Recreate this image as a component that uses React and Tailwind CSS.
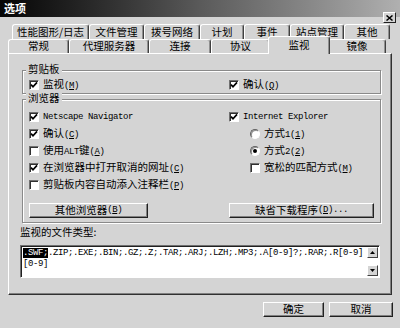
import clsx from "clsx";

// ASCII parts use a narrow fixed-width face, like the half-width glyphs of the original
const A = ({ children }) => (
  <span className="font-['Liberation_Mono',monospace] text-[9px] tracking-[-0.4px]">{children}</span>
);

const Key = ({ k }) => (
  <A>
    (<span className="underline">{k}</span>)
  </A>
);

const CheckBox = ({ checked }) => (
  <span className="w-[10px] h-[10px] shrink-0 bg-white border border-t-[#707070] border-l-[#707070] border-r-white border-b-white shadow-[inset_1px_1px_0_#303030] flex items-center justify-center">
    {checked && (
      <svg width="8" height="8" viewBox="0 0 8 8">
        <path d="M1 3.6 L3 5.8 L7 1.4" fill="none" stroke="#000" strokeWidth="1.7" />
      </svg>
    )}
  </span>
);

const Radio = ({ checked }) => (
  <span className="w-[10px] h-[10px] shrink-0 rounded-full bg-white border border-t-[#606060] border-l-[#606060] border-r-white border-b-white shadow-[inset_1px_1px_0_#909090] flex items-center justify-center">
    {checked && <span className="w-[4px] h-[4px] rounded-full bg-black" />}
  </span>
);

const Row = ({ children, className }) => (
  <div className={clsx("h-[17px] flex items-center gap-[4px] whitespace-nowrap leading-[12px]", className)}>
    {children}
  </div>
);

const Button = ({ children, className }) => (
  <button
    className={clsx(
      "h-[15px] flex items-center justify-center text-[10.5px] leading-none bg-[#d4d4d4] border border-t-white border-l-white border-r-[#202020] border-b-[#202020] shadow-[inset_-1px_-1px_0_#808080]",
      className
    )}
  >
    {children}
  </button>
);

const Tab = ({ children, className, active }) => (
  <div
    className={clsx(
      "flex items-center justify-center text-[10.5px] leading-none border-t border-l border-r border-t-white border-l-white border-r-[#404040] rounded-t-[3px] shadow-[inset_-1px_0_0_#909090] bg-[#d4d4d4]",
      active ? "h-[18px] -mx-[2px] -mb-px relative z-10" : "h-full",
      className
    )}
  >
    {children}
  </div>
);

const Group = ({ label, className, children }) => (
  <div className={clsx("relative border border-[#8a8a8a] shadow-[inset_1px_1px_0_#fff,1px_1px_0_#fff]", className)}>
    <span className="absolute -top-[8px] left-[3px] px-[2px] bg-[#d4d4d4] text-[10.5px] leading-[11px]">{label}</span>
    {children}
  </div>
);

export default function App() {
  return (
    <div className="relative w-[400px] h-[328px] bg-[#d4d4d4] text-black overflow-hidden font-['Noto_Sans_CJK_SC',sans-serif]">
      {/* title bar */}
      <div className="h-[17px] bg-linear-to-r from-[#060606] via-[#5a5a5a] to-[#b0b0b0] flex items-center pl-[4px]">
        <span className="text-white font-bold text-[11px] leading-none">选项</span>
      </div>
      <button className="absolute top-[12px] right-[4px] w-[13px] h-[11px] bg-[#d4d4d4] border border-t-white border-l-white border-r-[#202020] border-b-[#202020] flex items-center justify-center">
        <svg width="7" height="6" viewBox="0 0 7 6">
          <path d="M0.5 0.5 L6.5 5.5 M6.5 0.5 L0.5 5.5" stroke="#000" strokeWidth="1.5" />
        </svg>
      </button>

      <div className="mx-[8px] mt-[7px]">
        {/* back row of tabs */}
        <div className="flex h-[15px] ml-[4px]">
          <Tab className="w-[77px]">性能图形/日志</Tab>
          <Tab className="w-[55px]">文件管理</Tab>
          <Tab className="w-[56px]">拨号网络</Tab>
          <Tab className="w-[44px]">计划</Tab>
          <Tab className="w-[46px]">事件</Tab>
          <Tab className="w-[54px]">站点管理</Tab>
          <Tab className="w-[46px]">其他</Tab>
        </div>
        {/* front row of tabs */}
        <div className="flex items-end h-[14px]">
          <Tab className="w-[61px]">常规</Tab>
          <Tab className="w-[80px]">代理服务器</Tab>
          <Tab className="w-[62px]">连接</Tab>
          <Tab className="w-[59px]">协议</Tab>
          <Tab className="w-[62px]" active>
            监视
          </Tab>
          <Tab className="w-[58px]">镜像</Tab>
        </div>

        {/* panel */}
        <div className="h-[242px] border border-t-white border-l-white border-r-[#303030] border-b-[#303030] shadow-[inset_-1px_-1px_0_#808080] text-[10.5px]">
          <Group label="剪贴板" className="mt-[16px] ml-[13px] w-[359px] h-[24px] pt-[5px] pl-[6px]">
            <div className="flex">
              <Row className="w-[200px]">
                <CheckBox checked />
                <span>
                  监视<Key k="M" />
                </span>
              </Row>
              <Row>
                <CheckBox checked />
                <span>
                  确认<Key k="Q" />
                </span>
              </Row>
            </div>
          </Group>

          <Group label="浏览器" className="mt-[5px] ml-[13px] w-[359px] h-[124px] pt-[8px] pl-[6px]">
            <div className="flex">
              <div className="w-[200px] flex flex-col">
                <Row>
                  <CheckBox checked />
                  <A>Netscape Navigator</A>
                </Row>
                <Row>
                  <CheckBox checked />
                  <span>
                    确认<Key k="C" />
                  </span>
                </Row>
                <Row>
                  <CheckBox />
                  <span>
                    使用<A>ALT</A>键<Key k="A" />
                  </span>
                </Row>
                <Row>
                  <CheckBox checked />
                  <span>
                    在浏览器中打开取消的网址<Key k="C" />
                  </span>
                </Row>
                <Row>
                  <CheckBox />
                  <span>
                    剪贴板内容自动添入注释栏<Key k="P" />
                  </span>
                </Row>
              </div>
              <div className="flex flex-col">
                <Row>
                  <CheckBox checked />
                  <A>Internet Explorer</A>
                </Row>
                <Row className="pl-[21px]">
                  <Radio />
                  <span>
                    方式<A>1</A>
                    <Key k="1" />
                  </span>
                </Row>
                <Row className="pl-[21px]">
                  <Radio checked />
                  <span>
                    方式<A>2</A>
                    <Key k="2" />
                  </span>
                </Row>
                <Row className="pl-[21px]">
                  <CheckBox />
                  <span>
                    宽松的匹配方式<Key k="M" />
                  </span>
                </Row>
              </div>
            </div>
            <div className="flex mt-[10px] gap-[81px]">
              <Button className="w-[119px]">
                其他浏览器<Key k="B" />
              </Button>
              <Button className="w-[145px]">
                缺省下载程序<Key k="D" />
                <A>...</A>
              </Button>
            </div>
          </Group>

          <div className="ml-[11px] mt-[3px] h-[12px] leading-[12px]">监视的文件类型:</div>

          <div className="ml-[11px] mt-[7px] w-[360px] h-[33px] bg-white border border-t-[#707070] border-l-[#707070] border-r-white border-b-white shadow-[inset_1px_1px_0_#202020] flex">
            <div className="flex-1 pl-[2px] pt-[2px] overflow-hidden whitespace-nowrap font-['Liberation_Mono',monospace] text-[9px] tracking-[-0.4px] leading-[11px]">
              <span className="bg-black text-white">.SWF;</span>.ZIP;.EXE;.BIN;.GZ;.Z;.TAR;.ARJ;.LZH;.MP3;.A[0-9]?;.RAR;.R[0-9]
              <br />
              [0-9]
            </div>
            <div className="w-[11px] mr-[1px] flex flex-col justify-between py-[1px]">
              <div className="h-[11px] bg-[#d4d4d4] border border-t-white border-l-white border-r-[#404040] border-b-[#404040] flex items-center justify-center">
                <svg width="5" height="3" viewBox="0 0 5 3">
                  <path d="M2.5 0 L5 3 L0 3 Z" fill="#000" />
                </svg>
              </div>
              <div className="h-[11px] bg-[#d4d4d4] border border-t-white border-l-white border-r-[#404040] border-b-[#404040] flex items-center justify-center">
                <svg width="5" height="3" viewBox="0 0 5 3">
                  <path d="M0 0 L5 0 L2.5 3 Z" fill="#000" />
                </svg>
              </div>
            </div>
          </div>
        </div>
      </div>

      {/* dialog buttons */}
      <div className="flex justify-end gap-[5px] pr-[7px] mt-[7px]">
        <Button className="w-[61px] h-[15px]">确定</Button>
        <Button className="w-[64px] h-[15px]">取消</Button>
      </div>
    </div>
  );
}
